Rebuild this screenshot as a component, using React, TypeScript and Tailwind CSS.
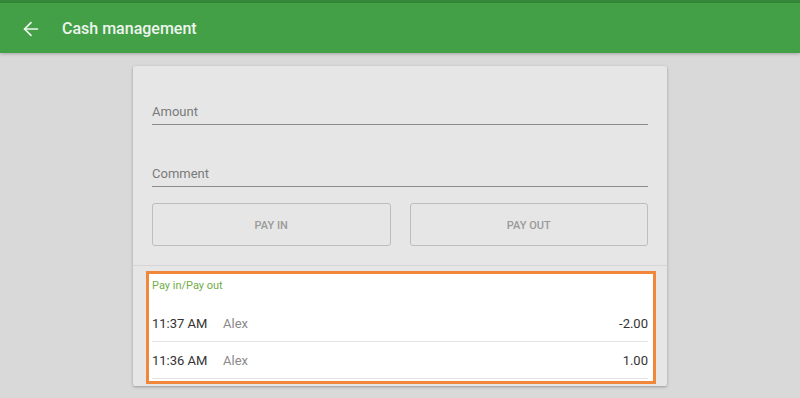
import { ArrowLeft } from "lucide-react";

const entries = [
  { time: "11:37 AM", name: "Alex", amount: "-2.00" },
  { time: "11:36 AM", name: "Alex", amount: "1.00" },
];

function Field({ label }: { label: string }) {
  return (
    <div>
      <div className="text-[13px] leading-4 text-[#7a7a7a]">{label}</div>
      <div className="mt-[4px] h-px bg-[#8c8c8c]" />
    </div>
  );
}

export default function App() {
  return (
    <div
      className="h-[398px] w-full overflow-hidden bg-[#d9d9d9]"
      style={{ fontFamily: "Roboto, 'Liberation Sans', sans-serif" }}
    >
      {/* status strip + toolbar */}
      <div className="h-[3px] bg-[#36883a]" />
      <header className="flex h-[50px] items-center bg-[#43a047] pt-[2px] shadow-[0_1px_3px_rgba(0,0,0,0.25)]">
        <ArrowLeft className="ml-[20px] h-[22px] w-[22px] text-[#eef5ee]" strokeWidth={1.9} />
        <h1 className="ml-[20px] text-[16px] font-medium text-[#eef5ee]">Cash management</h1>
      </header>

      <main className="flex justify-center pt-[13px]">
        <div className="w-[534px] rounded-[2px] bg-[#e6e6e6] pb-[2px] shadow-[0_1px_3px_rgba(0,0,0,0.3)]">
          {/* form */}
          <div className="px-[19px] pb-[19px] pt-[38px]">
            <Field label="Amount" />
            <div className="mt-[41px]">
              <Field label="Comment" />
            </div>
            <div className="mt-[16px] grid grid-cols-2 gap-[19px]">
              <button className="h-[43px] rounded-[3px] border border-[#bdbdbd] pt-[3px] text-[11px] font-medium text-[#9a9a9a]">
                PAY IN
              </button>
              <button className="h-[43px] rounded-[3px] border border-[#bdbdbd] pt-[3px] text-[11px] font-medium text-[#9a9a9a]">
                PAY OUT
              </button>
            </div>
          </div>
          <div className="h-px bg-[#d6d6d6]" />

          {/* history */}
          <div className="ml-[13px] mr-[11px] mt-[5px] border-[3px] border-[#f0873a] bg-white pl-[3px] pr-[5px]">
            <div className="pb-[12px] pt-[5px] text-[11px] leading-[14px] text-[#72ad48]">
              Pay in/Pay out
            </div>
            {entries.map((e) => (
              <div key={e.time} className="flex h-[37px] items-center border-b border-[#e3e3e3] pt-[1px] text-[13px]">
                <span className="w-[71px] text-[#333333]">{e.time}</span>
                <span className="flex-1 text-[#8a8a8a]">{e.name}</span>
                <span className="text-[#333333]">{e.amount}</span>
              </div>
            ))}
            <div className="h-[2px]" />
          </div>
        </div>
      </main>
    </div>
  );
}
